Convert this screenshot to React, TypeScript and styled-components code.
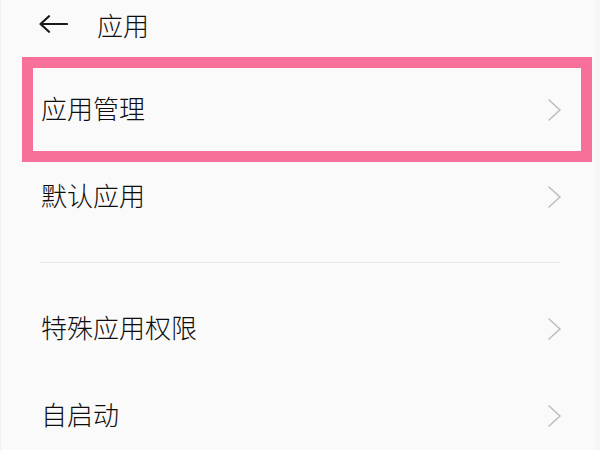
import styled, { createGlobalStyle } from 'styled-components';

const GlobalStyle = createGlobalStyle`
  html, body {
    margin: 0;
    padding: 0;
    background: #fafafa;
  }
  body {
    font-family: "Noto Sans CJK SC", "Noto Sans", sans-serif;
    color: #0e0e0e;
  }
`;

type Item = { label: string; highlighted?: boolean };

const sections: Item[][] = [
  [{ label: '应用管理', highlighted: true }, { label: '默认应用' }],
  [{ label: '特殊应用权限' }, { label: '自启动' }],
];

const BackArrow = () => (
  <svg width="29" height="18" viewBox="0 0 29 18" fill="none">
    <path
      d="M1.5 9H28M10 1.2L1.5 9L10 16.8"
      stroke="#1a1a1a"
      strokeWidth="2.2"
      strokeLinecap="round"
      strokeLinejoin="round"
    />
  </svg>
);

const Chevron = () => (
  <svg width="13" height="22" viewBox="0 0 13 22" fill="none">
    <path
      d="M1 1L12 11L1 21"
      stroke="#bdbdbd"
      strokeWidth="1.6"
      strokeLinecap="round"
      strokeLinejoin="round"
    />
  </svg>
);

export default function App() {
  return (
    <Page>
      <GlobalStyle />
      <Header>
        <BackButton>
          <BackArrow />
        </BackButton>
        <Title>应用</Title>
      </Header>
      <List>
        {sections.map((items, i) => (
          <Section key={i}>
            {i > 0 && <Divider />}
            {items.map((item) => (
              <Row key={item.label} $highlighted={item.highlighted}>
                <Label>{item.label}</Label>
                <Chevron />
              </Row>
            ))}
          </Section>
        ))}
      </List>
    </Page>
  );
}

const Page = styled.div`
  width: 600px;
  height: 450px;
  overflow: hidden;
  background: #fafafa;
  box-sizing: border-box;
  border-left: 1px solid #efefef;
  border-right: 5px solid #f6f6f6;
`;

const Header = styled.header`
  height: 48px;
  display: flex;
  align-items: center;
  padding-left: 38px;
  gap: 29px;
`;

const BackButton = styled.div`
  display: flex;
  align-items: center;
  height: 18px;
`;

const Title = styled.h1`
  margin: 0;
  font-size: 26px;
  font-weight: 300;
  line-height: 1;
  margin-top: 1px;
`;

const List = styled.div`
  padding-top: 18px;
`;

const Section = styled.div`
  display: flex;
  flex-direction: column;
`;

const Divider = styled.div`
  height: 1px;
  background: #e8e8e8;
  margin: 22px 35px 22px 39px;
`;

const Row = styled.div<{ $highlighted?: boolean }>`
  position: relative;
  height: 87px;
  display: flex;
  align-items: center;
  justify-content: space-between;
  padding: 0 34px 0 40px;

  &::after {
    content: '';
    display: ${(p) => (p.$highlighted ? 'block' : 'none')};
    position: absolute;
    top: -9px;
    bottom: -9px;
    left: 21px;
    right: 3px;
    border: 11px solid #f7709a;
    pointer-events: none;
  }
`;

const Label = styled.span`
  font-size: 26px;
  font-weight: 300;
  line-height: 1;
  margin-bottom: 4px;
`;
